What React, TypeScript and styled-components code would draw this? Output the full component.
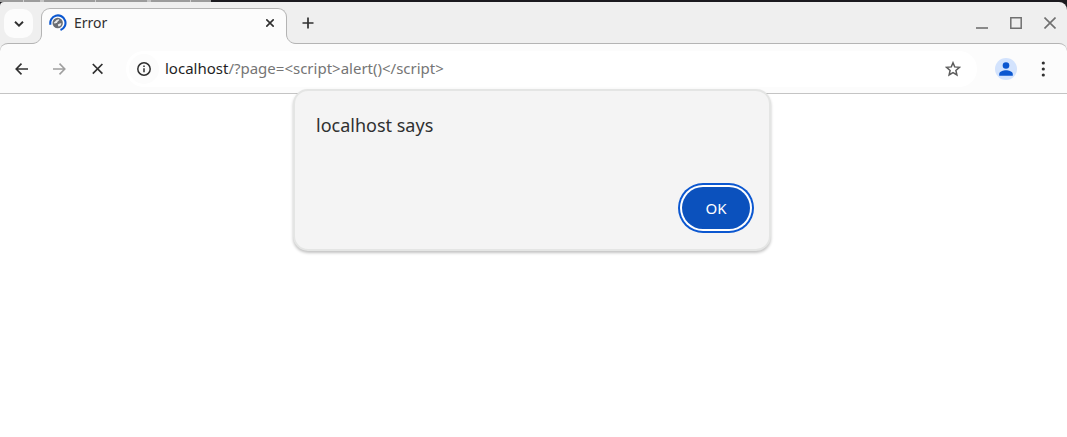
import React from "react";
import styled, { createGlobalStyle } from "styled-components";

const LINE = "#b4b4b4";
const SURFACE = "#fcfcfc";

const GlobalStyle = createGlobalStyle`
  * { box-sizing: border-box; }
  body { margin: 0; background: #fff; font-family: "Noto Sans", sans-serif; color: #303030; }
  button { font: inherit; color: inherit; border: 0; padding: 0; background: none; }
  svg { display: block; flex: none; }
  #root { display: flex; flex-direction: column; min-height: 100vh; }
`;

const Desktop = styled.div`
  background: #1b1a1f;
`;

const Backdrop = styled.div`
  height: 2px;
  width: 211px;
  background: linear-gradient(
    90deg,
    #9c9c9c 0 23px, #d0d0d0 23px 24px,
    #9c9c9c 24px 40px, #c4c4c4 40px 44px,
    #9c9c9c 44px 95px, #d0d0d0 95px 96px,
    #9c9c9c 96px 147px, #c4c4c4 147px 151px,
    #9c9c9c 151px 190px, #d0d0d0 190px 191px,
    #9c9c9c 191px
  );
`;

const TabStrip = styled.div`
  display: flex;
  align-items: flex-end;
  height: 41px;
  padding-left: 4px;
  background: #efefef;
  border-radius: 4px 8px 0 0;
`;

const TabSearch = styled.button`
  display: grid;
  place-items: center;
  width: 29px;
  height: 29px;
  margin-bottom: 5px;
  border-radius: 10px;
  background: ${SURFACE};
`;

const Flare = styled.svg`
  position: relative;
  z-index: 2;
  margin: 0 -1px -1px;
`;

const Tab = styled.div`
  position: relative;
  z-index: 1;
  display: flex;
  align-items: center;
  width: 246px;
  height: 36px;
  margin-bottom: -1px;
  padding: 0 8px 7px 7px;
  border: 1px solid ${LINE};
  border-bottom: 0;
  border-radius: 9px 9px 0 0;
  background: ${SURFACE};
`;

const TabTitle = styled.span`
  flex: 1;
  margin-left: 7px;
  font-size: 14px;
  line-height: 20px;
`;

const IconButton = styled.button<{ $w?: number; $h?: number }>`
  display: grid;
  place-items: center;
  flex: none;
  width: ${(p) => p.$w ?? 16}px;
  height: ${(p) => p.$h ?? 16}px;
`;

const WindowControls = styled.div`
  display: flex;
  align-self: center;
  margin-left: auto;
  color: #707070;
`;

const Toolbar = styled.div`
  background: #efefef;
`;

const ToolbarInner = styled.div`
  display: flex;
  align-items: center;
  height: 51px;
  padding: 0 4px 0 2px;
  border-top: 1px solid ${LINE};
  border-bottom: 1px solid #c4c4c4;
  border-radius: 8px 8px 0 0;
  background: ${SURFACE};
`;

const Omnibox = styled.form`
  display: flex;
  align-items: center;
  flex: 1;
  height: 36px;
  margin: 0 12px 0 10px;
  padding: 0 9px 0 3px;
  border-radius: 18px;
  background: #fff;
`;

const SiteInfo = styled.button`
  display: grid;
  place-items: center;
  width: 30px;
  height: 30px;
  border-radius: 15px;
  background: ${SURFACE};
`;

const Address = styled.div`
  flex: 1;
  margin-left: 6px;
  padding-bottom: 2px;
  font-size: 15px;
  line-height: 20px;
  color: #757575;
  white-space: nowrap;
`;

const Host = styled.span`
  color: #1f1f1f;
`;

const Page = styled.main`
  display: flex;
  flex: 1;
  align-items: flex-start;
  justify-content: center;
  background: #fff;
`;

const Dialog = styled.section`
  position: relative;
  z-index: 3;
  display: flex;
  flex-direction: column;
  width: 478px;
  margin: -5px 3px 8px 0;
  padding: 22px 19px 20px 21px;
  border: 2px solid #e4e5e4;
  border-radius: 15px;
  background: #f4f4f4;
  box-shadow: 0 2px 3px rgba(0, 0, 0, 0.24);
`;

const DialogTitle = styled.h1`
  margin: 0 0 50px;
  font-size: 18px;
  font-weight: 400;
  line-height: 24px;
`;

const OkButton = styled.button`
  align-self: flex-end;
  width: 68px;
  height: 42px;
  border-radius: 21px;
  background: #0b51bd;
  color: #fff;
  font-size: 15px;
  line-height: 20px;
  box-shadow: 0 0 0 2px #fff, 0 0 0 4px #0b57d0;
`;

function LeftFlare() {
  return (
    <Flare width="10" height="10" viewBox="0 0 10 10" aria-hidden="true">
      <path d="M0 9.5C5.5 9.5 9.5 5.5 9.5 0H10V10H0Z" fill={SURFACE} />
      <path d="M0 9.5C5.5 9.5 9.5 5.5 9.5 0" fill="none" stroke={LINE} />
    </Flare>
  );
}

function RightFlare() {
  return (
    <Flare width="10" height="10" viewBox="0 0 10 10" aria-hidden="true">
      <path d="M10 9.5C4.5 9.5 .5 5.5 .5 0H0V10H10Z" fill={SURFACE} />
      <path d="M10 9.5C4.5 9.5 .5 5.5 .5 0" fill="none" stroke={LINE} />
    </Flare>
  );
}

function LoadingGlobe() {
  return (
    <svg width="18" height="18" viewBox="0 0 18 18" fill="none" aria-hidden="true">
      <circle cx="8.7" cy="9" r="5.2" fill="#6b6e73" />
      <path d="M4.8 8.7 7.6 6l2-.8.8.9-1.7 1.4-.8 1.4H6.4L6.2 10ZM8.8 10.5l2.4-1.3 1.4.4-1.3 2.3-1.9.7Z" fill="#e8e8e8" />
      <path d="M1.5 10.8A7.6 7.6 0 1 1 11.5 16.1" stroke="#0b57d0" strokeWidth="2.1" />
    </svg>
  );
}

export default function App() {
  return (
    <>
      <GlobalStyle />
      <Desktop>
        <Backdrop />
        <TabStrip>
          <TabSearch aria-label="Search tabs">
            <svg width="10" height="6" viewBox="0 0 10 6" fill="none" stroke="#303030" strokeWidth="1.9">
              <path d="M1 .8 5 4.7 9 .8" />
            </svg>
          </TabSearch>
          <LeftFlare />
          <Tab>
            <LoadingGlobe />
            <TabTitle>Error</TabTitle>
            <IconButton aria-label="Close tab">
              <svg width="8" height="8" viewBox="0 0 8 8" stroke="#303030" strokeWidth="1.6">
                <path d="M.3.3 7.7 7.7M7.7.3.3 7.7" />
              </svg>
            </IconButton>
          </Tab>
          <RightFlare />
          <IconButton $w={26} $h={40} aria-label="New tab">
            <svg width="12" height="12" viewBox="0 0 12 12" stroke="#303030" strokeWidth="1.7">
              <path d="M6 .5v11M.5 6h11" />
            </svg>
          </IconButton>
          <WindowControls>
            <IconButton $w={34} $h={40} aria-label="Minimize">
              <svg width="12" height="12" viewBox="0 0 12 12" stroke="currentColor" strokeWidth="1.6">
                <path d="M0 11h12" />
              </svg>
            </IconButton>
            <IconButton $w={34} $h={40} aria-label="Maximize">
              <svg width="12" height="12" viewBox="0 0 12 12" fill="none" stroke="currentColor" strokeWidth="1.5">
                <path d="M.8.8h10.4v10.4H.8Z" />
              </svg>
            </IconButton>
            <IconButton $w={34} $h={40} aria-label="Close">
              <svg width="12" height="12" viewBox="0 0 12 12" stroke="currentColor" strokeWidth="1.6">
                <path d="M.5.5l11 11M11.5.5.5 11.5" />
              </svg>
            </IconButton>
          </WindowControls>
        </TabStrip>
        <Toolbar>
          <ToolbarInner>
            <IconButton $w={38} $h={36} aria-label="Back">
              <svg width="13" height="12" viewBox="0 0 13 12" fill="none" stroke="#303030" strokeWidth="1.6">
                <path d="M6.5.6 1.2 6l5.3 5.4M1.2 6H13" />
              </svg>
            </IconButton>
            <IconButton $w={38} $h={36} aria-label="Forward">
              <svg width="13" height="12" viewBox="0 0 13 12" fill="none" stroke="#9f9f9f" strokeWidth="1.6">
                <path d="M6.5.6 11.8 6l-5.3 5.4M11.8 6H0" />
              </svg>
            </IconButton>
            <IconButton $w={38} $h={36} aria-label="Stop">
              <svg width="12" height="12" viewBox="0 0 12 12" stroke="#303030" strokeWidth="1.7">
                <path d="M1.8 1l9.6 9.6M11.4 1l-9.6 9.6" />
              </svg>
            </IconButton>
            <Omnibox>
              <SiteInfo type="button" aria-label="Site information">
                <svg width="14" height="14" viewBox="0 0 14 14" fill="none" stroke="#303030" strokeWidth="1.5">
                  <circle cx="7" cy="7" r="6.2" />
                  <path d="M7 6.2v4M7 3.6v1.5" />
                </svg>
              </SiteInfo>
              <Address>
                <Host>localhost</Host>/?page=&lt;script&gt;alert()&lt;/script&gt;
              </Address>
              <IconButton $w={30} $h={30} type="button" aria-label="Bookmark this page">
                <svg width="16" height="16" viewBox="0 0 16 16" fill="none" stroke="#5c5c5c" strokeWidth="1.5">
                  <path d="M8 1.8 9.7 5.9l4.7.4-3.5 3.1 1 4.6L8 11.6 4.1 14l1-4.6-3.5-3.1 4.7-.4Z" />
                </svg>
              </IconButton>
            </Omnibox>
            <IconButton $w={34} $h={36} aria-label="Profile">
              <svg width="22" height="22" viewBox="0 0 22 22" aria-hidden="true">
                <circle cx="11" cy="11" r="11" fill="#d3e3fd" />
                <circle cx="11" cy="7.5" r="3.3" fill="#0b57d0" />
                <path d="M4.2 17.7v-1.7c0-2.6 4.2-3.8 6.8-3.8s6.8 1.2 6.8 3.8v1.7Z" fill="#0b57d0" />
              </svg>
            </IconButton>
            <IconButton $w={40} $h={36} aria-label="Menu">
              <svg width="4" height="16" viewBox="0 0 4 16" fill="#303030">
                <circle cx="2.3" cy="2" r="1.6" />
                <circle cx="2.3" cy="8" r="1.6" />
                <circle cx="2.3" cy="14" r="1.6" />
              </svg>
            </IconButton>
          </ToolbarInner>
        </Toolbar>
      </Desktop>
      <Page>
        <Dialog role="dialog" aria-labelledby="dialog-title">
          <DialogTitle id="dialog-title">localhost says</DialogTitle>
          <OkButton>OK</OkButton>
        </Dialog>
      </Page>
    </>
  );
}
